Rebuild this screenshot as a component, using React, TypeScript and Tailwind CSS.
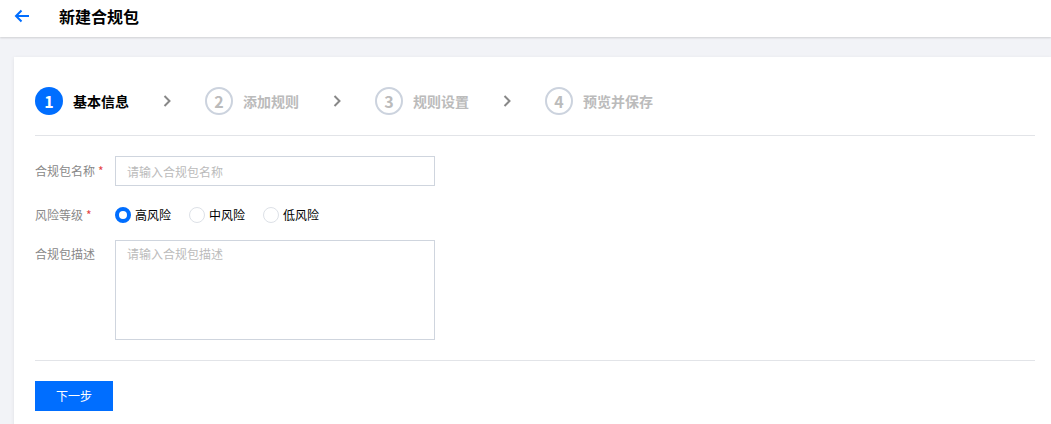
import { useState } from 'react'

const font = { fontFamily: '"Noto Sans CJK SC", "Liberation Sans", sans-serif' }

const steps = [
  { n: 1, label: '基本信息' },
  { n: 2, label: '添加规则' },
  { n: 3, label: '规则设置' },
  { n: 4, label: '预览并保存' },
]

function Chevron() {
  return (
    <svg width="10" height="14" viewBox="0 0 10 14" className="mx-[33px]">
      <path d="M2.5 2 L7.5 7 L2.5 12" fill="none" stroke="#888" strokeWidth="2" />
    </svg>
  )
}

export default function App() {
  const [risk, setRisk] = useState('high')

  const risks = [
    { key: 'high', label: '高风险' },
    { key: 'mid', label: '中风险' },
    { key: 'low', label: '低风险' },
  ]

  return (
    <div className="w-[1051px] h-[424px] overflow-hidden bg-[#f2f3f7]" style={font}>
      {/* Header */}
      <div className="h-[37px] bg-white flex items-center shadow-[0_1px_2px_rgba(0,0,0,0.15)] relative z-10">
        <svg width="18" height="18" viewBox="0 0 18 18" className="ml-[13px] mb-[6px]">
          <path d="M16 9 H3 M8.5 3.5 L3 9 L8.5 14.5" fill="none" stroke="#006eff" strokeWidth="2" />
        </svg>
        <span className="ml-[28px] mb-[5px] text-[16px] font-bold text-black">新建合规包</span>
      </div>

      {/* Card */}
      <div className="ml-[14px] mt-[20px] bg-white h-[400px] pl-[21px] pr-[16px] shadow-[0_1px_4px_rgba(0,0,0,0.08)]">
        {/* Steps */}
        <div className="h-[79px] flex items-center pt-[10px] border-b border-[#e2e4e8]">
          {steps.map((s, i) => (
            <div key={s.n} className="flex items-center">
              {s.n === 1 ? (
                <div className="w-[28px] h-[28px] rounded-full bg-[#006eff] text-white flex items-center justify-center text-[16px] font-bold">
                  {s.n}
                </div>
              ) : (
                <div className="w-[28px] h-[28px] rounded-full border-2 border-[#ccd3de] text-[#bbb] flex items-center justify-center text-[16px] font-bold">
                  {s.n}
                </div>
              )}
              <span
                className={`ml-[10px] text-[14px] font-bold ${s.n === 1 ? 'text-black' : 'text-[#bbb]'}`}
              >
                {s.label}
              </span>
              {i < steps.length - 1 && <Chevron />}
            </div>
          ))}
        </div>

        {/* Form */}
        <div className="pt-[20px]">
          <div className="flex items-center h-[30px]">
            <label className="w-[80px] text-[12px] text-[#888]">
              合规包名称<span className="text-[#e54545] ml-[3px]">*</span>
            </label>
            <input
              className="w-[320px] h-[30px] border border-[#cfd5de] px-[11px] text-[12px] outline-none placeholder:text-[#bbb]"
              placeholder="请输入合规包名称"
            />
          </div>

          <div className="flex items-center h-[30px] mt-[14px]">
            <label className="w-[80px] text-[12px] text-[#888]">
              风险等级<span className="text-[#e54545] ml-[3px]">*</span>
            </label>
            <div className="flex items-center">
              {risks.map((r) => (
                <button
                  key={r.key}
                  onClick={() => setRisk(r.key)}
                  className="flex items-center mr-[18px] text-[12px] text-black"
                >
                  {risk === r.key ? (
                    <span className="w-[16px] h-[16px] rounded-full border-[4px] border-[#006eff] bg-white" />
                  ) : (
                    <span className="w-[16px] h-[16px] rounded-full border border-[#dde1e7] bg-white" />
                  )}
                  <span className="ml-[4px]">{r.label}</span>
                </button>
              ))}
            </div>
          </div>

          <div className="flex items-start mt-[10px]">
            <label className="w-[80px] text-[12px] text-[#888] pt-[5px]">合规包描述</label>
            <textarea
              className="w-[320px] h-[100px] border border-[#cfd5de] px-[11px] py-[4px] text-[12px] outline-none resize-none placeholder:text-[#bbb]"
              placeholder="请输入合规包描述"
            />
          </div>
        </div>

        <div className="mt-[20px] border-t border-[#e2e4e8]" />

        <button className="mt-[20px] w-[78px] h-[30px] bg-[#006eff] text-white text-[12px]">下一步</button>
      </div>
    </div>
  )
}
